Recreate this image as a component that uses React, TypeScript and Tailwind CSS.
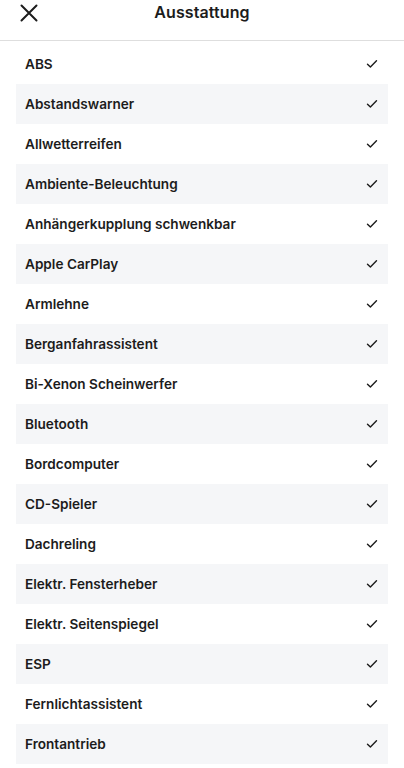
const items = [
  'ABS',
  'Abstandswarner',
  'Allwetterreifen',
  'Ambiente-Beleuchtung',
  'Anhängerkupplung schwenkbar',
  'Apple CarPlay',
  'Armlehne',
  'Berganfahrassistent',
  'Bi-Xenon Scheinwerfer',
  'Bluetooth',
  'Bordcomputer',
  'CD-Spieler',
  'Dachreling',
  'Elektr. Fensterheber',
  'Elektr. Seitenspiegel',
  'ESP',
  'Fernlichtassistent',
  'Frontantrieb',
];

function Check() {
  return (
    <svg width="12" height="10" viewBox="0 0 12 10" fill="none" className="text-[#1c1c1c]">
      <path d="M1.5 5.2 L4.4 8 L10.5 1.8" stroke="currentColor" strokeWidth="1.4" strokeLinecap="round" strokeLinejoin="round" />
    </svg>
  );
}

export default function App() {
  return (
    <div className="w-[404px] h-[768px] overflow-hidden bg-white font-['Inter',sans-serif] text-[#1c1c1c]">
      <header className="relative h-[41px] border-b border-[#dedede] flex items-center justify-center">
        <button className="absolute left-[18px] top-[2px] w-[22px] h-[22px] flex items-center justify-center">
          <svg width="20" height="20" viewBox="0 0 20 20" fill="none">
            <path d="M2.5 2.5 L17.5 17.5 M17.5 2.5 L2.5 17.5" stroke="#1c1c1c" strokeWidth="2" strokeLinecap="round" />
          </svg>
        </button>
        <h1 className="text-[16px] font-semibold tracking-[0.1px] -mt-[16px]">Ausstattung</h1>
      </header>

      <ul className="px-4 pt-[3px]">
        {items.map((item, i) => (
          <li
            key={item}
            className={`h-10 flex items-center justify-between pl-[9px] pr-[10px] ${i % 2 === 1 ? 'bg-[#f5f6f8]' : ''}`}
          >
            <span className="text-[13.6px] font-semibold">{item}</span>
            <Check />
          </li>
        ))}
      </ul>
    </div>
  );
}
